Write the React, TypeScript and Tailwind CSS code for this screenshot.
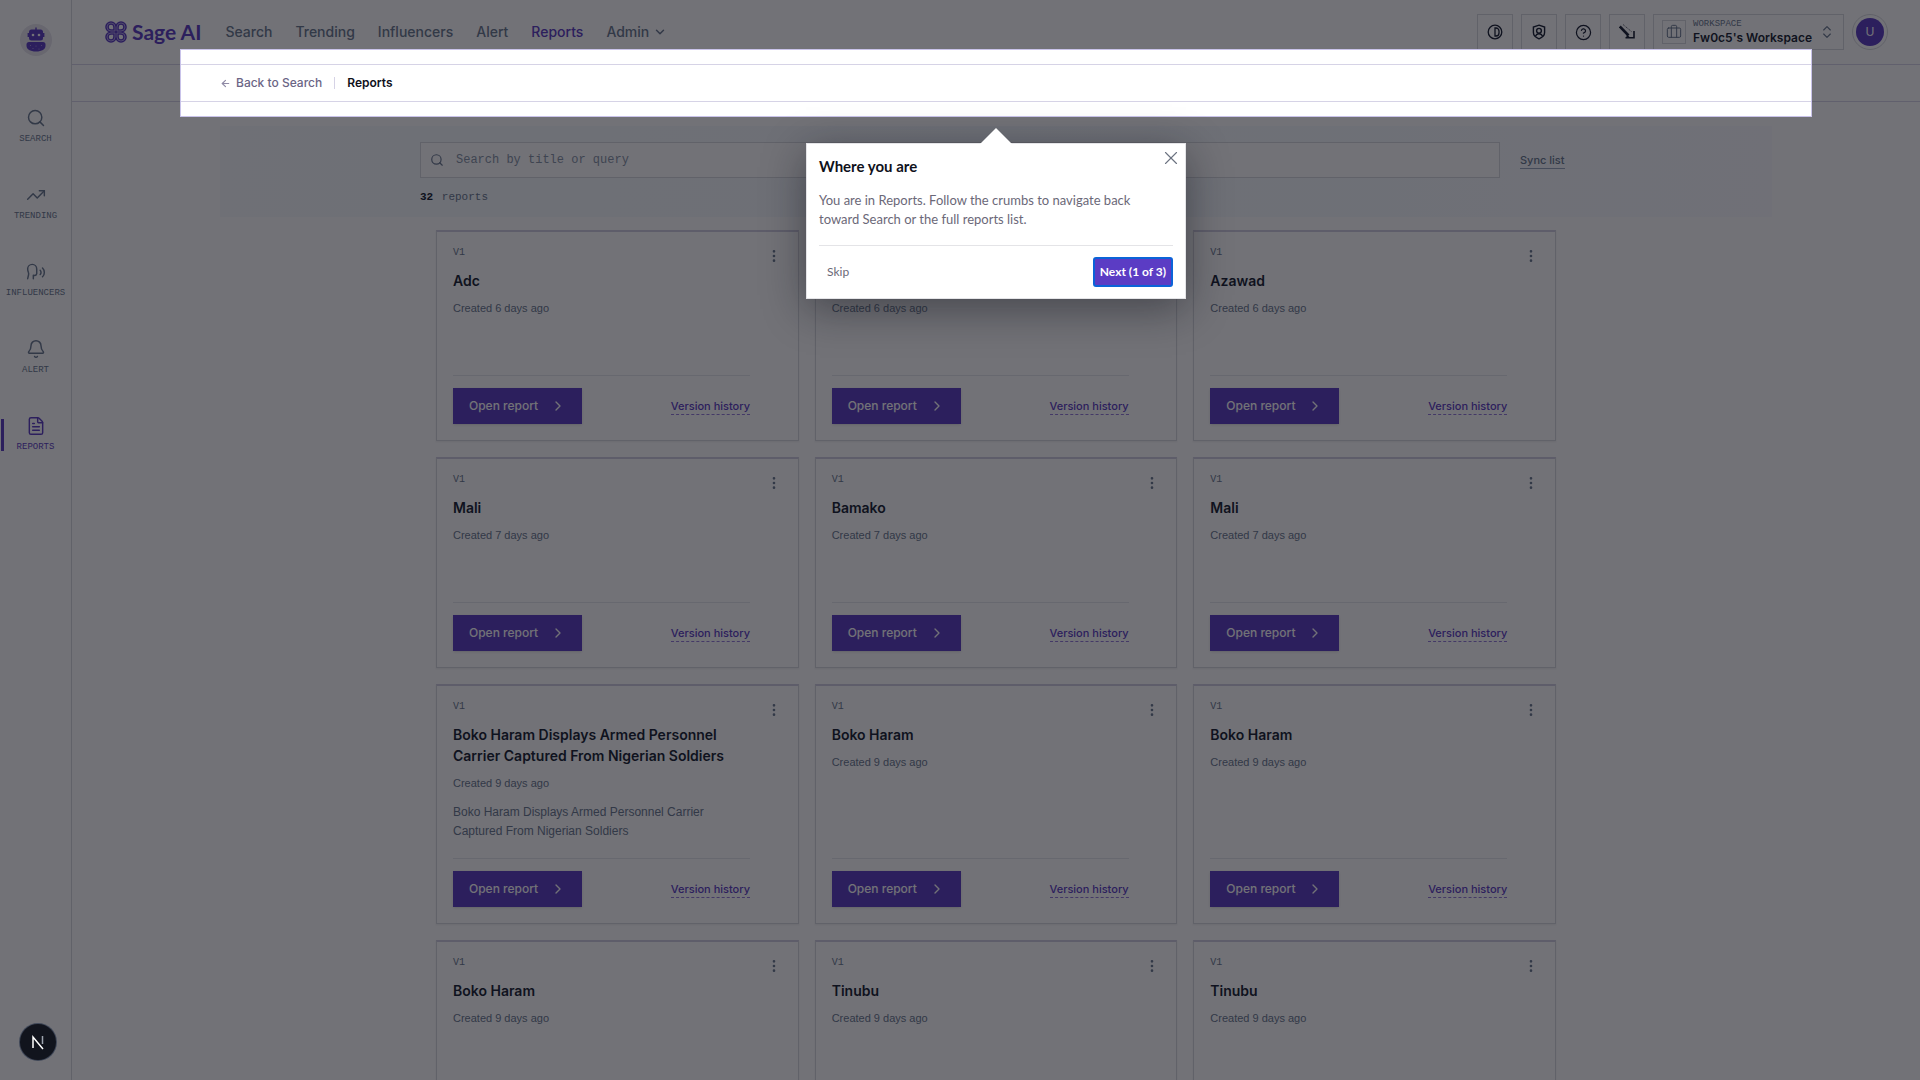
import {
  ArrowLeft,
  Bell,
  Briefcase,
  ChevronDown,
  ChevronRight,
  ChevronsUpDown,
  CircleQuestionMark,
  EllipsisVertical,
  FileText,
  Search,
  Speech,
  TrendingUp,
  X,
} from "lucide-react";
import React from "react";

const sideLinks = [
  { label: "Search", icon: Search },
  { label: "Trending", icon: TrendingUp },
  { label: "Influencers", icon: Speech },
  { label: "Alert", icon: Bell },
  { label: "Reports", icon: FileText, active: true },
];

const navLinks = ["Search", "Trending", "Influencers", "Alert", "Reports"];

const reports = [
  { title: "Adc", created: "Created 6 days ago" },
  { title: "Adc", created: "Created 6 days ago" },
  { title: "Azawad", created: "Created 6 days ago" },
  { title: "Mali", created: "Created 7 days ago" },
  { title: "Bamako", created: "Created 7 days ago" },
  { title: "Mali", created: "Created 7 days ago" },
  {
    title: "Boko Haram Displays Armed Personnel Carrier Captured From Nigerian Soldiers",
    created: "Created 9 days ago",
    text: "Boko Haram Displays Armed Personnel Carrier Captured From Nigerian Soldiers",
  },
  { title: "Boko Haram", created: "Created 9 days ago" },
  { title: "Boko Haram", created: "Created 9 days ago" },
  { title: "Boko Haram", created: "Created 9 days ago" },
  { title: "Tinubu", created: "Created 9 days ago" },
  { title: "Tinubu", created: "Created 9 days ago" },
];

function RobotLogo() {
  return (
    <svg viewBox="0 0 32 32" className="h-8 w-8">
      <circle cx="16" cy="16" r="16" fill="#e6e4ec" />
      <path d="M15.3 3.5h1.4v3h-1.4z" fill="#5636c0" />
      <rect x="9" y="5.5" width="14" height="11" rx="2.5" fill="#5636c0" />
      <path d="M7.6 9h1.6v4H7.6zM22.8 9h1.6v4h-1.6z" fill="#5636c0" />
      <circle cx="13" cy="11" r="1.3" fill="#fff" />
      <circle cx="19" cy="11" r="1.3" fill="#fff" />
      <path
        d="M9 18h14a2.5 2.5 0 0 1 2.5 2.5V22c0 3-3.500 5.5-9.500 5.5S6.500 25 6.500 22v-1.500A2.500 2.500 0 0 1 9 18z"
        fill="#5636c0"
      />
      <g fill="#fff" opacity="0.5">
        <circle cx="10.5" cy="21.5" r="0.6" />
        <circle cx="13" cy="24.5" r="0.6" />
        <circle cx="16" cy="22" r="0.6" />
        <circle cx="19" cy="25" r="0.6" />
        <circle cx="21.5" cy="21.5" r="0.6" />
      </g>
    </svg>
  );
}

function SageMark() {
  return (
    <svg viewBox="0 0 24 24" className="h-6 w-6" fill="none" stroke="#5636c0">
      <path
        d="M11 11H7a4 4 0 1 1 4-4zM13 11V7a4 4 0 1 1 4 4zM11 13v4a4 4 0 1 1-4-4zM13 13h4a4 4 0 1 1-4 4z"
        strokeWidth="3.6"
      />
      <path
        d="M11 11H7a4 4 0 1 1 4-4zM13 11V7a4 4 0 1 1 4 4zM11 13v4a4 4 0 1 1-4-4zM13 13h4a4 4 0 1 1-4 4z"
        stroke="#cfc6ee"
        strokeWidth="0.7"
      />
    </svg>
  );
}

function ContrastIcon() {
  return (
    <svg viewBox="0 0 16 16" className="h-4 w-4" fill="none" stroke="currentColor" strokeWidth="1.3">
      <circle cx="8" cy="8" r="6.8" />
      <path d="M8 4v8h1a3 3 0 0 0 3-3V7a3 3 0 0 0-3-3z" />
    </svg>
  );
}

function ShieldUserIcon() {
  return (
    <svg viewBox="0 0 16 16" className="h-4 w-4" fill="none" stroke="currentColor" strokeWidth="1.4">
      <path d="M8 1.2 13.6 3v5.5c0 3-2.4 5-5.6 6.3-3.2-1.3-5.6-3.3-5.6-6.3V3z" />
      <circle cx="8" cy="6.8" r="2.4" />
      <path d="M4.5 12c.6-1.5 1.9-2.3 3.5-2.3s2.9.8 3.5 2.3" />
    </svg>
  );
}

function PointerIcon() {
  return (
    <svg viewBox="0 0 16 16" className="h-4 w-4" fill="none" stroke="currentColor">
      <path d="M.8 2.5 9.5 11.5" strokeWidth="2.6" />
      <path d="M4 .5 13 8" strokeWidth="0.8" strokeDasharray="1 1" />
      <path d="M6.5 13.8H15V7" strokeWidth="1.6" />
      <path d="M8 10.5 11.5 14H7z" fill="currentColor" stroke="none" />
    </svg>
  );
}

function Sidebar() {
  return (
    <aside className="flex w-[72px] shrink-0 flex-col border-r border-[#d5d7dd] pt-6">
      <a href="#" aria-label="Home" className="mb-8 flex justify-center">
        <RobotLogo />
      </a>
      <nav>
        {sideLinks.map(({ label, icon: Icon, active }) => (
          <a
            key={label}
            href="#"
            className={
              active
                ? "relative flex h-[77px] flex-col items-center justify-center gap-1 text-[#5636c0]"
                : "relative flex h-[77px] flex-col items-center justify-center gap-1 text-[#64748b]"
            }
          >
            {active && <span className="absolute left-px h-8 w-[3px] bg-[#5636c0]" />}
            <Icon size={20} strokeWidth={1.75} />
            <span className="font-['Liberation_Mono',monospace] text-[9px] leading-[14px] uppercase">
              {label}
            </span>
          </a>
        ))}
      </nav>
    </aside>
  );
}

function Header() {
  const square =
    "flex h-9 w-9 items-center justify-center border border-[#d5d7dd] text-[#0f172a]";

  return (
    <header className="flex h-[65px] items-center justify-between border-b border-[#d6d3e6] px-8">
      <div className="flex items-center">
        <a href="#" className="mr-6 flex items-center gap-1 text-[#5636c0]">
          <SageMark />
          <span className="font-[Lato,sans-serif] text-[21px] leading-6 font-bold">Sage AI</span>
        </a>
        <nav className="flex items-center gap-[23px] text-sm font-medium text-[#64748b]">
          {navLinks.map((label) => (
            <a key={label} href="#" className={label === "Reports" ? "text-[#5636c0]" : ""}>
              {label}
            </a>
          ))}
          <button className="flex items-center gap-1">
            Admin
            <ChevronDown size={14} strokeWidth={2.5} />
          </button>
        </nav>
      </div>

      <div className="flex items-center gap-2">
        <button aria-label="Theme" className={square}>
          <ContrastIcon />
        </button>
        <button aria-label="Admin" className={square}>
          <ShieldUserIcon />
        </button>
        <button aria-label="Help" className={square}>
          <CircleQuestionMark size={17} strokeWidth={1.75} />
        </button>
        <button aria-label="Tour" className={square}>
          <PointerIcon />
        </button>
        <button className="flex h-9 items-center gap-[7px] border border-[#d5d7dd] px-2 text-left">
          <span className="flex h-6 w-6 items-center justify-center border border-[#d5d7dd] text-[#64748b]">
            <Briefcase size={16} strokeWidth={1.5} />
          </span>
          <span className="flex flex-col">
            <span className="font-['Liberation_Mono',monospace] text-[9px] leading-3 text-[#64748b] uppercase">
              Workspace
            </span>
            <span className="text-xs leading-4 font-semibold text-[#0f172a]">Fw0c5's Workspace</span>
          </span>
          <ChevronsUpDown size={16} strokeWidth={1.75} className="text-[#64748b]" />
        </button>
        <button
          aria-label="Account"
          className="flex h-9 w-9 items-center justify-center rounded-full border border-[#d5d7dd]"
        >
          <span className="flex h-7 w-7 items-center justify-center rounded-full bg-[#5636c0] text-xs text-white">
            U
          </span>
        </button>
      </div>
    </header>
  );
}

function TourPopover() {
  return (
    <div
      role="dialog"
      aria-labelledby="tour-title"
      className="absolute top-full left-1/2 mt-[27px] w-[380px] -translate-x-1/2 border border-[#e4e4e7] bg-white px-3 pt-2.5 pb-[11px] font-[Lato,sans-serif] shadow-[0_10px_40px_rgba(15,17,27,0.45)]"
    >
      <svg viewBox="0 0 32 16" className="absolute -top-4 left-1/2 h-4 w-8 -translate-x-1/2">
        <path d="M16 0 32 16H0z" fill="#fff" />
      </svg>
      <button aria-label="Close" className="absolute top-[3px] right-[3px] text-[#6b7280]">
        <X size={22} strokeWidth={1.25} />
      </button>
      <h2 id="tour-title" className="text-[15px] leading-6 font-bold text-[#0f111b]">
        Where you are
      </h2>
      <p className="mt-[13px] pr-6 text-[13px] leading-[19px] text-[#6b6878]">
        You are in Reports. Follow the crumbs to navigate back toward Search or the full reports list.
      </p>
      <div className="mt-4 flex items-center justify-between border-t border-[#e4e4e7] pt-[11px]">
        <button className="px-2 text-xs text-[#6b6878]">Skip</button>
        <button className="h-[30px] rounded-[3px] border-2 border-[#0b63d8] bg-[#5b3cc4] px-[5px] text-xs font-bold text-white">
          Next (1 of 3)
        </button>
      </div>
    </div>
  );
}

function Breadcrumbs() {
  return (
    <div className="border-b border-[#d6d3e6] px-8">
      <div className="relative mx-auto max-w-[1600px]">
        <nav aria-label="Breadcrumb" className="flex h-9 items-center px-6 text-xs">
          <a href="#" className="flex items-center gap-[5px] font-medium text-[#6b6585]">
            <ArrowLeft size={11} strokeWidth={2.5} className="text-[#8f8aa5]" />
            Back to Search
          </a>
          <span className="mx-3 h-3 w-px bg-[#d6d3e6]" />
          <span className="font-semibold text-[#0f111b]">Reports</span>
        </nav>
        {/* the shadow dims the rest of the page */}
        <div className="absolute -inset-4 z-20 border border-[#c9c3ea] shadow-[0_0_0_9999px_rgba(15,16,24,0.59)]">
          <TourPopover />
        </div>
      </div>
    </div>
  );
}

type Report = { title: string; created: string; text?: string };

function ReportCard({ report }: { report: Report }) {
  return (
    <article className="flex min-h-[211px] justify-between border border-t-2 border-[#d5d7dd] border-t-[#cfcce0] pr-2 pb-4 pl-4 shadow-[0_1px_2px_rgba(15,17,27,0.08)]">
      <div className="flex w-[297px] flex-col pt-3.5">
        <p className="font-['Liberation_Mono',monospace] text-[10px] leading-[14px] text-[#64748b]">V1</p>
        <h3 className="mt-2.5 text-sm leading-[21px] font-semibold text-[#0f172a]">{report.title}</h3>
        <p className="mt-2 font-['Liberation_Sans',sans-serif] text-[11px] leading-[18px] text-[#64748b]">
          {report.created}
        </p>
        {report.text && (
          <p className="mt-[11px] pb-[17px] font-['Liberation_Sans',sans-serif] text-xs leading-[19px] text-[#64748b]">
            {report.text}
          </p>
        )}
        <div className="mt-auto flex items-center justify-between border-t border-[#e5e7eb] pt-3">
          <a
            href="#"
            className="flex h-9 items-center gap-3 bg-[#5636c0] px-4 text-xs font-medium text-white shadow-sm"
          >
            Open report
            <ChevronRight size={16} />
          </a>
          <a
            href="#"
            className="border-b border-dashed border-[#8f76d8] text-[11px] leading-4 font-medium text-[#5636c0]"
          >
            Version history
          </a>
        </div>
      </div>
      <button
        aria-label="Report actions"
        className="mt-2 flex h-8 w-8 items-center justify-center text-[#64748b]"
      >
        <EllipsisVertical size={16} />
      </button>
    </article>
  );
}

function Reports() {
  return (
    <main className="mx-auto w-full max-w-[1600px] px-6 pt-6">
      <section className="bg-linear-to-r from-[#f7fafd] via-[#f3f8fd] to-[#f9fbfe] pt-4 pb-3">
        <div className="mx-auto max-w-6xl">
          <div className="flex items-center gap-5">
            <label className="flex h-9 w-[1080px] items-center gap-3 border border-[#d5d7dd] bg-white px-[9px]">
              <Search size={14} className="shrink-0 text-[#64748b]" />
              <input
                type="search"
                aria-label="Search reports"
                placeholder="Search by title or query"
                className="w-full font-['Liberation_Mono',monospace] text-xs outline-none placeholder:text-[#8390a3]"
              />
            </label>
            <button className="border-b border-[#94a3b8] text-[11px] leading-4 font-medium text-[#64748b]">
              Sync list
            </button>
          </div>
          <p className="mt-[11px] font-['Liberation_Mono',monospace] text-[11px] leading-4 text-[#64748b]">
            <strong className="mr-0.5 text-[#0f172a]">32</strong> reports
          </p>
        </div>
      </section>

      <section className="mx-auto mt-[13px] grid max-w-6xl grid-cols-3 gap-4 px-4">
        {reports.map((report, i) => (
          <ReportCard key={i} report={report} />
        ))}
      </section>
    </main>
  );
}

function App() {
  return (
    <div className="relative flex h-screen overflow-hidden bg-white font-[Inter,sans-serif]">
      <Sidebar />
      <div className="min-w-0 flex-1">
        <Header />
        <Breadcrumbs />
        <Reports />
      </div>

      <button
        aria-label="Developer tools"
        className="absolute bottom-5 left-5 z-30 flex h-9 w-9 items-center justify-center rounded-full bg-[#11141d] ring-1 ring-[#3f4758]"
      >
        <svg viewBox="0 0 16 16" className="h-4 w-4" fill="none" stroke="#fff" strokeWidth="1.5">
          <path d="M3 14V3l10 12" />
          <path d="M12.5 2v8" stroke="#9ca3af" />
        </svg>
      </button>
    </div>
  );
}

export default App;
